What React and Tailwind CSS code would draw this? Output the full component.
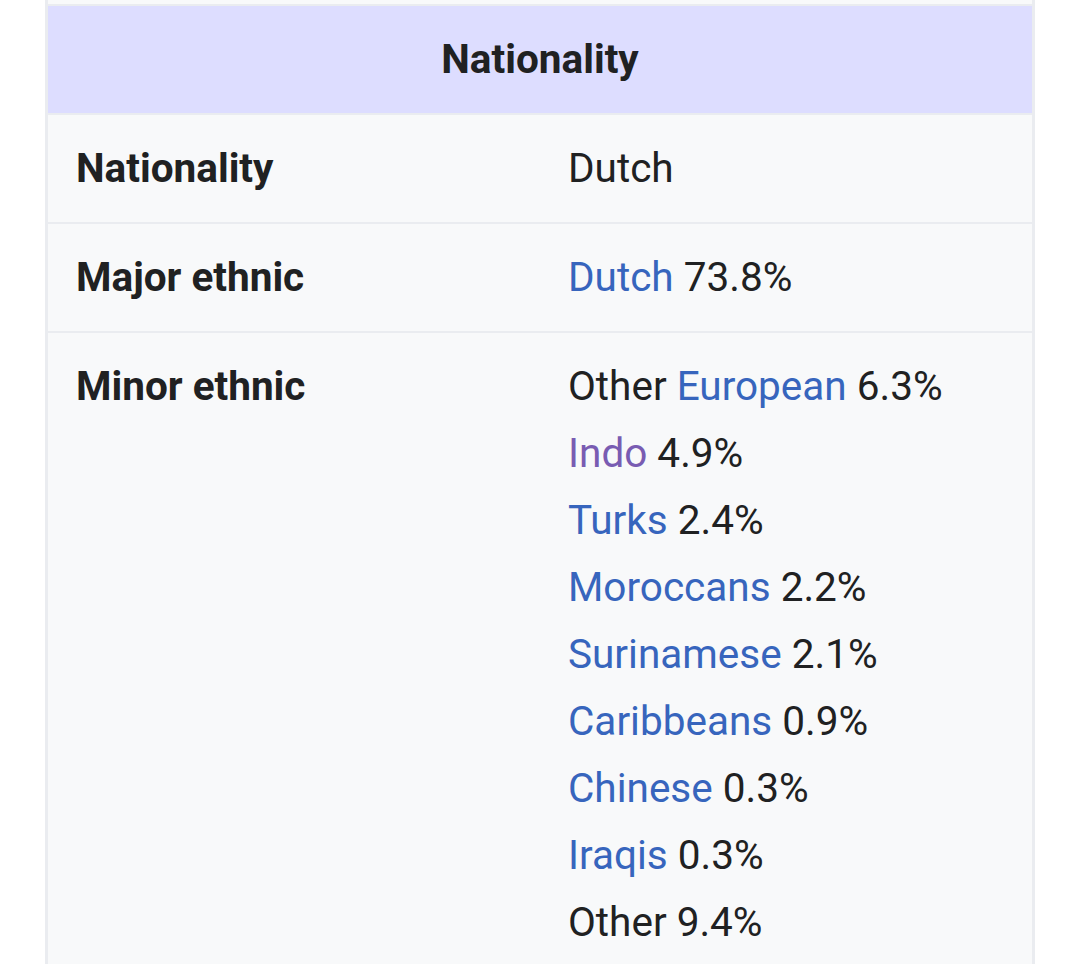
const minor = [
  { pre: 'Other ', link: 'European', pct: '6.3%' },
  { link: 'Indo', pct: '4.9%', visited: true },
  { link: 'Turks', pct: '2.4%' },
  { link: 'Moroccans', pct: '2.2%' },
  { link: 'Surinamese', pct: '2.1%' },
  { link: 'Caribbeans', pct: '0.9%' },
  { link: 'Chinese', pct: '0.3%' },
  { link: 'Iraqis', pct: '0.3%' },
  { pre: 'Other 9.4%' },
];

const Row = ({ label, children, last }) => (
  <div className={`grid grid-cols-[520px_1fr] ${last ? '' : 'border-b-2 border-[#eaecf0]'}`}>
    <div className="pl-[28px] py-5 font-bold">{label}</div>
    <div className="py-5">{children}</div>
  </div>
);

const App = () => {
  return (
    <div className="min-h-[964px] bg-white overflow-hidden font-['Roboto',sans-serif] text-[40.5px] leading-[67px] text-[#202122]">
      <div className="ml-[45px] w-[990px] min-h-[964px] border-x-[3px] border-[#eaecf0] bg-[#f8f9fa]">
        <div className="h-1" />
        {/* header */}
        <div className="border-y-2 border-[#eaecf0] bg-[#ddddff] py-5 text-center font-bold">
          Nationality
        </div>

        <Row label="Nationality">Dutch</Row>
        <Row label="Major ethnic">
          <span className="text-[#3765bd]">Dutch</span> 73.8%
        </Row>
        <Row label="Minor ethnic" last>
          {minor.map((m, i) => (
            <div key={i}>
              {m.pre}
              {m.link && (
                <span className={m.visited ? 'text-[#795cb2]' : 'text-[#3765bd]'}>{m.link}</span>
              )}
              {m.pct && ` ${m.pct}`}
            </div>
          ))}
        </Row>
      </div>
    </div>
  );
};

export default App;
